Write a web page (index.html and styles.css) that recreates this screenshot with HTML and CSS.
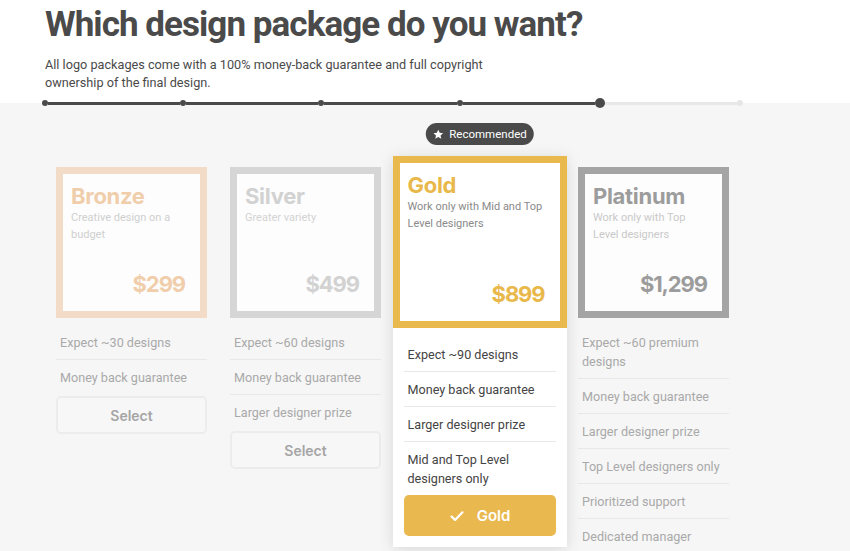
FILE: index.html
```
<!DOCTYPE html>
<html lang="en">
<head>
	<meta charset="UTF-8">
	<title>Which design package do you want?</title>
	<link rel="stylesheet" href="styles.css">
</head>
<body>
	<header class="intro">
		<h1 class="intro-title">Which design package do you want?</h1>
		<p class="intro-text">All logo packages come with a 100% money-back guarantee and full copyright<br>ownership of the final design.</p>
	</header>

	<div class="steps">
		<div class="steps-track">
			<span class="dot"></span><span class="seg"></span>
			<span class="dot"></span><span class="seg"></span>
			<span class="dot"></span><span class="seg"></span>
			<span class="dot"></span><span class="seg"></span>
			<span class="dot dot-now"></span><span class="seg seg-todo"></span>
			<span class="dot dot-todo"></span>
		</div>
	</div>

	<main class="plans">
		<!-- bronze -->
		<div class="plan plan-bronze">
			<div class="plan-card">
				<h2 class="plan-name">Bronze</h2>
				<p class="plan-desc">Creative design on a budget</p>
				<div class="plan-price">$299</div>
			</div>
			<ul class="plan-list">
				<li>Expect ~30 designs</li>
				<li>Money back guarantee</li>
			</ul>
			<button class="plan-btn">Select</button>
		</div>

		<!-- silver -->
		<div class="plan plan-silver">
			<div class="plan-card">
				<h2 class="plan-name">Silver</h2>
				<p class="plan-desc">Greater variety</p>
				<div class="plan-price">$499</div>
			</div>
			<ul class="plan-list">
				<li>Expect ~60 designs</li>
				<li>Money back guarantee</li>
				<li>Larger designer prize</li>
			</ul>
			<button class="plan-btn">Select</button>
		</div>

		<!-- gold, the chosen one -->
		<div class="plan plan-gold">
			<span class="badge">
				<svg width="11" height="11" viewBox="0 0 24 24"><path d="M12 1.5l3.1 6.9 7.4.7-5.6 5 1.7 7.4L12 17.6l-6.6 3.9 1.7-7.4-5.6-5 7.4-.7z" fill="#fff"/></svg>
				Recommended
			</span>
			<div class="plan-card">
				<h2 class="plan-name">Gold</h2>
				<p class="plan-desc">Work only with Mid and Top Level designers</p>
				<div class="plan-price">$899</div>
			</div>
			<ul class="plan-list">
				<li>Expect ~90 designs</li>
				<li>Money back guarantee</li>
				<li>Larger designer prize</li>
				<li>Mid and Top Level designers only</li>
			</ul>
			<button class="plan-btn plan-btn-on">
				<svg width="16" height="16" viewBox="0 0 16 16"><path d="M2.5 8.5l3.6 3.4 7.4-7.6" fill="none" stroke="#fff" stroke-width="2.2" stroke-linecap="round" stroke-linejoin="round"/></svg>
				Gold
			</button>
		</div>

		<!-- platinum -->
		<div class="plan plan-platinum">
			<div class="plan-card">
				<h2 class="plan-name">Platinum</h2>
				<p class="plan-desc">Work only with Top Level designers</p>
				<div class="plan-price">$1,299</div>
			</div>
			<ul class="plan-list">
				<li>Expect ~60 premium designs</li>
				<li>Money back guarantee</li>
				<li>Larger designer prize</li>
				<li>Top Level designers only</li>
				<li>Prioritized support</li>
				<li>Dedicated manager</li>
			</ul>
		</div>
	</main>
</body>
</html>
```
FILE: styles.css
```
*{box-sizing:border-box;}
html,body{margin:0;padding:0;}
body{
	background-color:#f6f6f6;
	font-family:Roboto,"Liberation Sans",sans-serif;
	color:#444;
	overflow:hidden;
}
h1,h2,p,ul,li{margin:0;padding:0;}
li{list-style:none;}

/* header */
.intro{
	background-color:#fff;
	padding:3px 45px 5px;
}
.intro-title{
	font-family:Roboto,"Liberation Sans",sans-serif;
	font-size:35px;
	line-height:44px;
	font-weight:700;
	letter-spacing:-0.95px;
	color:#4a4a4a;
}
.intro-text{
	margin-top:9px;
	font-size:12.7px;
	line-height:18px;
	color:#4a4a4a;
}

/* progress */
.steps{
	height:12px;
	padding:0 0 0 42px;
	background:linear-gradient(#fff 50%,#f6f6f6 50%);
}
.steps-track{
	width:701px;
	height:12px;
	display:flex;
	align-items:center;
}
.dot{
	width:6px;
	height:6px;
	border-radius:50%;
	background-color:#4a4a4a;
	flex:none;
}
.dot-now{width:10px;height:10px;}
.dot-todo{background-color:#e6e6e6;}
.seg{
	flex:1;
	height:3px;
	background-color:#4a4a4a;
}
.seg-todo{background-color:#e8e8e8;}

/* plans */
.plans{
	display:flex;
	align-items:flex-start;
	gap:23px;
	padding:47px 0 0 56px;
}
.plan{
	width:151px;
	margin-top:11px;
	flex:none;
}
.plan-card{
	height:151px;
	border:7px solid #ccc;
	background-color:#fdfdfd;
	padding:9px 8px 13px 8px;
	display:flex;
	flex-direction:column;
}
.plan-name{
	font-family:Inter,"Liberation Sans",sans-serif;
	font-size:22px;
	line-height:26px;
	font-weight:700;
	letter-spacing:-0.3px;
}
.plan-desc{
	padding-right:4px;
	font-size:11px;
	line-height:17px;
}
.plan-price{
	margin-top:auto;
	padding-right:7px;
	text-align:right;
	font-family:Inter,"Liberation Sans",sans-serif;
	font-size:22px;
	line-height:28px;
	font-weight:700;
	letter-spacing:-1.1px;
}
.plan-list{
	margin-top:7px;
	font-size:12.6px;
	line-height:19px;
	color:#a9a9a9;
}
.plan-list li{
	padding:8px 4px 7px;
	border-bottom:1px solid #e8e8e8;
}
.plan-list li:last-child{border-bottom:none;}
.plan-btn{
	display:flex;
	align-items:center;
	justify-content:center;
	gap:12px;
	width:151px;
	height:38px;
	margin-top:2px;
	border:2px solid #ececec;
	border-radius:5px;
	background-color:#f7f7f7;
	font-family:Inter,"Liberation Sans",sans-serif;
	font-size:14px;
	font-weight:600;
	color:#a5a5a5;
	cursor:pointer;
	outline:none;
}

.plan-bronze .plan-card{border-color:#f2dcc7;}
.plan-bronze .plan-name,.plan-bronze .plan-price{color:#f0ceab;}
.plan-bronze .plan-desc{color:#cfcfcf;}

.plan-silver .plan-card{border-color:#d6d6d6;}
.plan-silver .plan-name,.plan-silver .plan-price{color:#d2d2d2;}
.plan-silver .plan-desc{color:#d3d3d3;}

.plan-platinum .plan-card{border-color:#a4a4a4;}
.plan-platinum .plan-name,.plan-platinum .plan-price{color:#9c9c9c;}
.plan-platinum .plan-desc{color:#c9c9c9;}

.plan-gold{
	position:relative;
	width:174px;
	margin:0 -11.5px;
	padding:0 11px 11px;
	background-color:#fff;
	box-shadow:0 2px 14px rgba(0,0,0,0.13);
}
.plan-gold .plan-card{
	height:172px;
	margin:0 -11px;
	border-color:#e9b94e;
	background-color:#fff;
}
.plan-gold .plan-name,.plan-gold .plan-price{color:#e9b84b;}
.plan-gold .plan-desc{color:#8a8a8a;}
.plan-gold .plan-list{margin-top:9px;color:#444;}
.plan-btn-on{
	width:152px;
	height:41px;
	margin-top:0;
	border:none;
	background-color:#e9b94f;
	color:#fff;
	font-size:15px;
}

.badge{
	position:absolute;
	top:-33px;
	left:50%;
	transform:translateX(-50%);
	display:flex;
	align-items:center;
	gap:6px;
	height:22px;
	padding:0 7px 0 7px;
	border-radius:11px;
	background-color:#4a4a4a;
	color:#fff;
	font-size:11.5px;
	white-space:nowrap;
}
```
